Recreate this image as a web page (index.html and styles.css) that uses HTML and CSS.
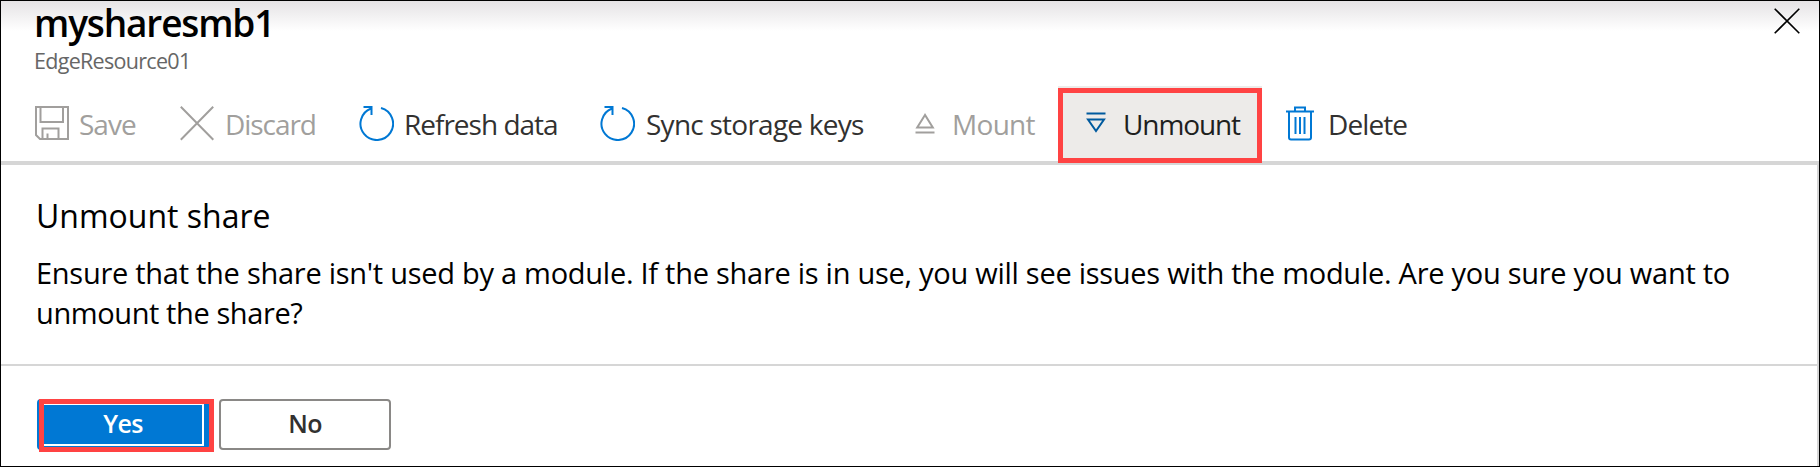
FILE: index.html
```html
<!DOCTYPE html>
<html lang="en">
<head>
<meta charset="utf-8">
<title>mysharesmb1</title>
<link rel="stylesheet" href="styles.css">
</head>
<body>
<div class="blade">
  <header class="header">
    <div>
      <h1 class="title">mysharesmb1</h1>
      <div class="subtitle">EdgeResource01</div>
    </div>
    <svg class="close" width="26" height="26" viewBox="0 0 26 26"><path d="M.7.7l24.6 24.6M25.3.7L.7 25.3"/></svg>
  </header>
  <nav class="toolbar">
    <div class="cmd save off">
      <svg width="34" height="35" viewBox="0 0 34 35"><path d="M1 1h32v32H5l-4-4zM5.500 1v15h22.500V1M7.500 33V22.500h16V33M12.500 33v-5.500"/></svg>
      <span class="label">Save</span>
    </div>
    <div class="cmd discard off">
      <svg width="34" height="35" viewBox="0 0 34 35"><path d="M.8.8l32.500 33M33.200.8L.8 33.800"/></svg>
      <span class="label">Discard</span>
    </div>
    <div class="cmd refresh">
      <svg width="35" height="35" viewBox="0 0 35 35"><path d="M22 2A16.300 16.300 0 1 1 12 2.500M4.500 1h8v8"/></svg>
      <span class="label">Refresh data</span>
    </div>
    <div class="cmd sync">
      <svg width="35" height="35" viewBox="0 0 35 35"><path d="M22 2A16.300 16.300 0 1 1 12 2.500M4.500 1h8v8"/></svg>
      <span class="label">Sync storage keys</span>
    </div>
    <div class="cmd mount off">
      <svg width="20" height="21" viewBox="0 0 20 21"><path d="M10 2L2.200 14.500h15.600zM.5 19.500h19"/></svg>
      <span class="label">Mount</span>
    </div>
    <div class="cmd unmount">
      <svg width="20" height="21" viewBox="0 0 20 21"><path d="M.5 1.500h19M2 7.500h16L10 19z"/></svg>
      <span class="label">Unmount</span>
    </div>
    <div class="cmd delete">
      <svg width="28" height="35" viewBox="0 0 28 35"><path d="M0 5.500h28M9 5V1.500h10V5M3 5.500v26q0 2 2 2h18q2 0 2-2v-26M9.500 11v17M14 11v17M18.500 11v17"/></svg>
      <span class="label">Delete</span>
    </div>
  </nav>
  <main class="dialog">
    <section class="message">
      <h2 class="heading">Unmount share</h2>
      <p class="body">Ensure that the share isn't used by a module. If the share is in use, you will see issues with the module. Are you sure you want to<br><span class="line2">unmount the share?</span></p>
    </section>
    <footer class="actions">
      <button class="btn yes"><span>Yes</span></button>
      <button class="btn no"><span>No</span></button>
    </footer>
  </main>
</div>
</body>
</html>
```

FILE: styles.css
```css
* { box-sizing: border-box; }
body { margin: 0; font-family: "Open Sans", "Noto Sans", sans-serif; background: #fff; color: #000; }
h1, h2, p { margin: 0; font-weight: 400; }
svg { fill: none; display: block; flex: none; }
.blade { width: 1820px; height: 467px; border: 1px solid #000; display: flex; flex-direction: column; background: linear-gradient(#e5e3e5, #fff 30px); }
.header { display: flex; justify-content: space-between; height: 85px; flex: none; padding: 0 19px 0 33px; }
.title { font-size: 37px; line-height: 43px; font-weight: 600; white-space: nowrap; letter-spacing: -1.15px; }
.subtitle { font-size: 21.500px; line-height: 30px; color: #666; white-space: nowrap; letter-spacing: -.7px; margin-top: 2px; }
.close { margin-top: 7px; stroke: #000; stroke-width: 1.6; }
.toolbar { display: flex; height: 79px; flex: none; border-bottom: 4px solid #d6d6d6; }
.cmd { display: flex; align-items: center; height: 75px; flex: none; font-size: 28px; line-height: 38px; color: #323130; white-space: nowrap; padding-left: 34px; gap: 10px; letter-spacing: -.7px; }
.cmd svg { stroke: #0078d4; stroke-width: 2; }
.cmd.off { color: #a19f9d; }
.off svg { stroke: #a19f9d; }
.save { width: 145px; letter-spacing: -1px; }
.discard { width: 179px; gap: 11px; letter-spacing: -1.05px; }
.refresh { width: 241px; letter-spacing: -1px; }
.sync { width: 315px; gap: 11px; letter-spacing: -.75px; }
.mount { width: 177px; gap: 17px; }
.cmd.unmount { position: relative; width: 204px; padding-left: 28px; gap: 17px; background: #edebe9; color: #201f1e; letter-spacing: -1.1px; }
.unmount::after { content: ""; position: absolute; inset: 2px 0 -2px; border: 5px solid #ff4343; }
.unmount svg { stroke: #005a9e; margin-top: -2px; }
.cmd.delete { padding-left: 24px; gap: 14px; letter-spacing: -.9px; }
.dialog { flex: 1; background: #fff; border-right: 2px solid #d6d6d6; }
.message { height: 201px; border-bottom: 2px solid #d6d6d6; padding: 28px 0 0 35px; }
.heading { font-size: 32px; line-height: 46px; }
.body { margin-top: 14px; font-size: 29px; line-height: 40px; white-space: nowrap; letter-spacing: -.27px; }
.line2 { letter-spacing: -.4px; }
.actions { display: flex; gap: 10px; padding: 33px 0 0 36px; }
.btn { position: relative; width: 172px; height: 51px; border-radius: 4px; font-family: inherit; font-size: 25px; font-weight: 600; line-height: 30px; padding: 0 0 4px; letter-spacing: -.7px; }
.yes { color: #fff; background: #0078d4; border: 0; }
.yes::before { content: ""; position: absolute; inset: 4px 5px 4px 2px; border: 2px solid #fff; }
.yes::after { content: ""; position: absolute; inset: 0 -5px -2px 2px; border: 5px solid #ff4343; }
.no { color: #323130; background: #fff; border: 2px solid #8a8886; }
```
